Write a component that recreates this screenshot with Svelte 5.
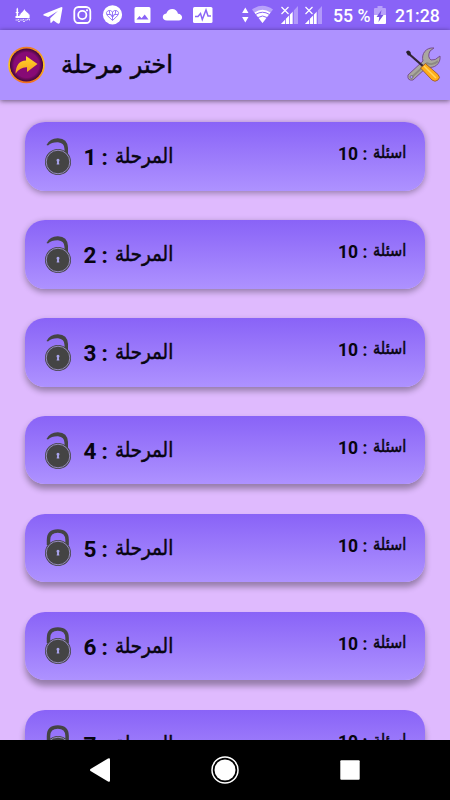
<script lang="ts">
	const stages = [1, 2, 3, 4, 5, 6, 7].map((id) => ({ id, questions: 10, open: id < 5 }));
</script>

<main>
	<div class="status">
		<svg class="apps" width="225" height="30" viewBox="0 0 225 30" fill="#fff">
			<path d="M16.500 9l.8-1.500.8 1.500v9h-1.600zM15.700 12h3v1h-3zM19.500 18v-3.500h1c0-2 3-2.500 3.800-5.500 1 3 4.500 3.500 4.500 5.500h.8V18zM15.500 16h4v2h-4z" />
			<path d="M15.500 20h3v-1m1 1h4v-1m1 1h3v-1h2v1.500M18 21.500h2m3 0h2" fill="none" stroke="#fff" stroke-width=".7" />
			<path d="M61.500 7Q63 7 62.300 9l-2.400 13.500q-.6 1.900-2.600.7l-3.800-2.800-2.200 2.300q-.7.500-.9-.4l-.2-4.100 7.700-7.200-9.700 6-4.400-1.400q-1.600-.7.200-1.700z" />
			<g fill="none" stroke="#fff" stroke-width="1.800">
				<rect x="74.300" y="7" width="16" height="16" rx="4.300" />
				<circle cx="82.300" cy="15" r="4.100" />
			</g>
			<circle cx="87" cy="10.300" r="1.100" />
			<circle cx="112.500" cy="14.800" r="9.600" />
			<g fill="none" stroke="#8a66f7" stroke-width=".9">
				<path d="M112.500 20.500l-5.500-5.300q-1.600-3.200.9-4.400 2.600-1.200 4.600 1.100 2-2.300 4.600-1.100 2.500 1.200.9 4.400zM112.500 12v8M109.500 11v2.500l3 2.500 3-2.500V11M107 14.500h3.500l2 3 2-3h3.500" />
			</g>
			<path d="M136 7h13q1.500 0 1.500 1.500v13q0 1.500-1.500 1.500h-13q-1.500 0-1.500-1.500v-13Q134.500 7 136 7zm.5 12.500h12l-3.800-5-3.100 3.800-2.200-2.300z" fill-rule="evenodd" />
			<path d="M167 20.500c-5.300 0-5.600-6.600-.7-7 2.300-6.300 10.500-5.600 11.700.2 5.200.2 5.500 6.800.7 6.800z" />
			<rect x="193" y="7" width="19.500" height="16" rx="1.500" />
			<path d="M195 16.500h3l2.500-3 1.800 6 3.700-9.500 2 6h3" fill="none" stroke="#8a66f7" stroke-width="1.500" />
		</svg>
		<svg class="radio" width="96" height="30" viewBox="235 0 96 30" fill="#fff">
			<path d="M245.300 7.500l3.200 5.500h-6.400zM242.100 17h6.400l-3.200 5.500z" />
			<path d="M252 9.500q10.500-7.500 21 0L262.500 23z" opacity=".4" />
			<path d="M254.500 12.500q8-5.300 16 0L262.500 23z" />
			<path d="M255.500 14.500q7-4.500 14 0M258 17.500q4.500-3 9 0" fill="none" stroke="#8a66f7" stroke-width="1" />
			{#each [281, 305] as x}
				<path d="M{x} 24l17-18v18z" opacity=".35" />
				<path d="M{x} 24l11.500-12v12z" />
				<path d="M{x + 4.500} 16v8M{x + 8.500} 12v12M{x + 12.500} 8v16" fill="none" stroke="#8a66f7" stroke-width=".8" />
				<path d="M{x + .5} 7l7 7m0-7l-7 7" fill="none" stroke="#fff" stroke-width="1.200" />
			{/each}
		</svg>
		<span class="percent">55 %</span>
		<svg class="battery" width="12" height="19" viewBox="0 0 12 19" fill="#fff">
			<path d="M0 3q0-1 1-1h2.500V0h5v2H11q1 0 1 1v6H0z" opacity=".4" />
			<path d="M0 9h12v8q0 1-1 1H1q-1 0-1-1z" />
			<path d="M7.500 4L2.500 11H5.300L4.500 16 9.500 9H6.500z" fill="#7652e4" />
		</svg>
		<span class="clock">21:28</span>
	</div>

	<header>
		<svg class="back" width="38" height="38" viewBox="0 0 38 38">
			<defs>
				<linearGradient id="ring" x1="0" y1="0" x2="0" y2="1">
					<stop offset="0" stop-color="#f07a25" />
					<stop offset=".5" stop-color="#ffca18" />
					<stop offset="1" stop-color="#f36b20" />
				</linearGradient>
				<radialGradient id="disc">
					<stop offset=".75" stop-color="#870a75" />
					<stop offset="1" stop-color="#3f0835" />
				</radialGradient>
				<linearGradient id="gold" x1="0" y1="0" x2="0" y2="1">
					<stop offset="0" stop-color="#ffd928" />
					<stop offset="1" stop-color="#f89b20" />
				</linearGradient>
			</defs>
			<circle cx="18.500" cy="19" r="18.300" fill="url(#ring)" />
			<circle cx="18.500" cy="19" r="16.600" fill="url(#disc)" />
			<path d="M18 10l11.500 8L19 26v-4.800q-7-.4-11.500 6.500Q8 15 18 14.500z" fill="url(#gold)" />
		</svg>
		<h1 dir="rtl" lang="ar">اختر مرحلة</h1>
		<svg class="tools" width="38" height="38" viewBox="0 0 38 38">
			<path d="M4 29L19 15C17 8 22 1 30 2l-4 3q-3 6 1 9 4 1 9-4c1 8-6 13-13 11L9 34q-6 1-5-5z" fill="#aaa79f" stroke="#77518d" stroke-width="1" />
			<path d="M8 31L23 17q6 3 11-2" fill="none" stroke="#8c8982" stroke-width="1.800" />
			<circle cx="7.500" cy="31" r="1.500" fill="#ae92ff" stroke="#666" stroke-width=".7" />
			<path d="M4.500 7.500L20 21" stroke="#342536" stroke-width="2.300" />
			<path d="M2 6q2-3 4.500 0l.5 3-3 .5z" fill="#28202a" />
			<path d="M16.500 22l5-4.500L34 28.500q3 3 0 5.500t-6 0z" fill="#ffad18" stroke="#91512f" stroke-width=".8" />
			<path d="M20 20l12 12" stroke="#ffd65e" stroke-width="1.500" />
		</svg>
	</header>

	<section>
		{#each stages as stage}
			<div class="card" style="--drop: {1 + stage.id * 0.8}px">
				<svg class="lock" width="28" height="40" viewBox="0 0 28 40">
					{#if stage.open}
						<path d="M2.500 9Q6 2 14 2.200q9.500.3 10 9.800v9h-3.500v-8q0-6-6.500-6.700-6-.3-10 3.200z" fill="#444" />
					{:else}
						<path d="M4.500 18v-5q0-9 9.300-9t9.300 9v5" fill="none" stroke="#444" stroke-width="3.500" />
					{/if}
					<circle cx="14" cy="26" r="13" fill="#444" />
					<circle cx="14" cy="26" r="11.800" fill="none" stroke="#a99cdd" stroke-width=".8" />
					<path d="M12.700 25a1.500 1.500 0 1 1 2.600 0l-.5 1 .6 2.500h-2.800l.6-2.500z" fill="#a9a4ed" />
				</svg>
				<div class="name">
					<b>{stage.id}</b><b class="colon">:</b><span lang="ar">المرحلة</span>
				</div>
				<div class="count">
					<b>{stage.questions}</b><b class="colon">:</b><span lang="ar">اسئلة</span>
				</div>
			</div>
		{/each}
	</section>

	<nav>
		<svg width="450" height="60" viewBox="0 0 450 60" fill="#fff">
			<path d="M90.500 29l17.500-10.500q2-1 2 1v21q0 2-2 1L90.500 31q-1-1 0-2z" />
			<circle cx="225" cy="30" r="13" fill="none" stroke="#fff" stroke-width="1.500" />
			<circle cx="225" cy="30" r="10.500" />
			<rect x="340.300" y="20.300" width="19.400" height="19.400" rx="1" />
		</svg>
	</nav>
</main>

<style>
	:global(body) {
		margin: 0;
		overflow: hidden;
	}

	main {
		display: flex;
		flex-direction: column;
		width: 450px;
		height: 800px;
		overflow: hidden;
		background: #dfbafe;
		font-family: Roboto, sans-serif;
		color: #080510;
	}

	svg {
		display: block;
		flex: none;
	}

	[lang="ar"] {
		font-family: "DejaVu Sans", sans-serif;
		font-weight: 400;
		-webkit-text-stroke: 0.5px #080510;
	}

	.status {
		display: flex;
		align-items: center;
		flex: none;
		height: 30px;
		background: #8963f7;
		color: #fff;
		font-size: 17.7px;
		font-weight: 500;
		line-height: 30px;
		white-space: nowrap;
	}
	.status span {
		padding-top: 1px;
	}
	.radio {
		margin-left: 10px;
	}
	.percent {
		width: 38px;
		margin-left: 2px;
	}
	.battery {
		margin-left: 3px;
	}
	.clock {
		margin-left: 9px;
	}

	header {
		display: flex;
		align-items: center;
		box-sizing: border-box;
		flex: none;
		height: 70px;
		padding: 0 8px;
		background: #ae92ff;
		box-shadow: 0 1px 5px #0008;
		z-index: 1;
	}
	h1 {
		width: 112px;
		margin: 0 auto 0 15px;
		font-size: 25px;
		line-height: 32px;
		white-space: nowrap;
		transform: scaleX(0.965);
		transform-origin: right;
	}

	section {
		display: flex;
		flex-direction: column;
		flex: 1;
		gap: 29.500px;
		min-height: 0;
		padding: 22.400px 25px 0;
		overflow: hidden;
	}

	.card {
		display: flex;
		box-sizing: border-box;
		flex: none;
		height: 68.400px;
		padding: 0 19px;
		border-radius: 20px;
		background: linear-gradient(#8963f7, #ae92ff);
		box-shadow: 0 var(--drop) 6px #0005;
	}
	.lock {
		margin-top: 13.500px;
	}

	.name, .count {
		display: flex;
		direction: ltr;
		align-items: baseline;
		line-height: 26px;
		white-space: nowrap;
	}
	.name {
		height: 28px;
		margin: 22px auto 0 11.500px;
		font-size: 22.500px;
	}
	.name b {
		width: 18px;
	}
	.name .colon {
		width: 13px;
	}
	.name span {
		font-size: 20px;
		transform: translateY(-2px) scale(0.91, 1.06);
		transform-origin: left;
	}
	.count {
		width: 68px;
		height: 24px;
		margin-top: 19px;
		font-size: 17.500px;
	}
	.count b {
		width: 24.500px;
		flex: none;
	}
	.count .colon {
		width: 10px;
	}
	.count span {
		font-size: 16px;
		transform: translateY(-2px) scale(0.91, 1.04);
		transform-origin: left;
	}
	b {
		font-weight: 700;
	}

	nav {
		flex: none;
		height: 60px;
		background: #000;
		z-index: 1;
	}
</style>
